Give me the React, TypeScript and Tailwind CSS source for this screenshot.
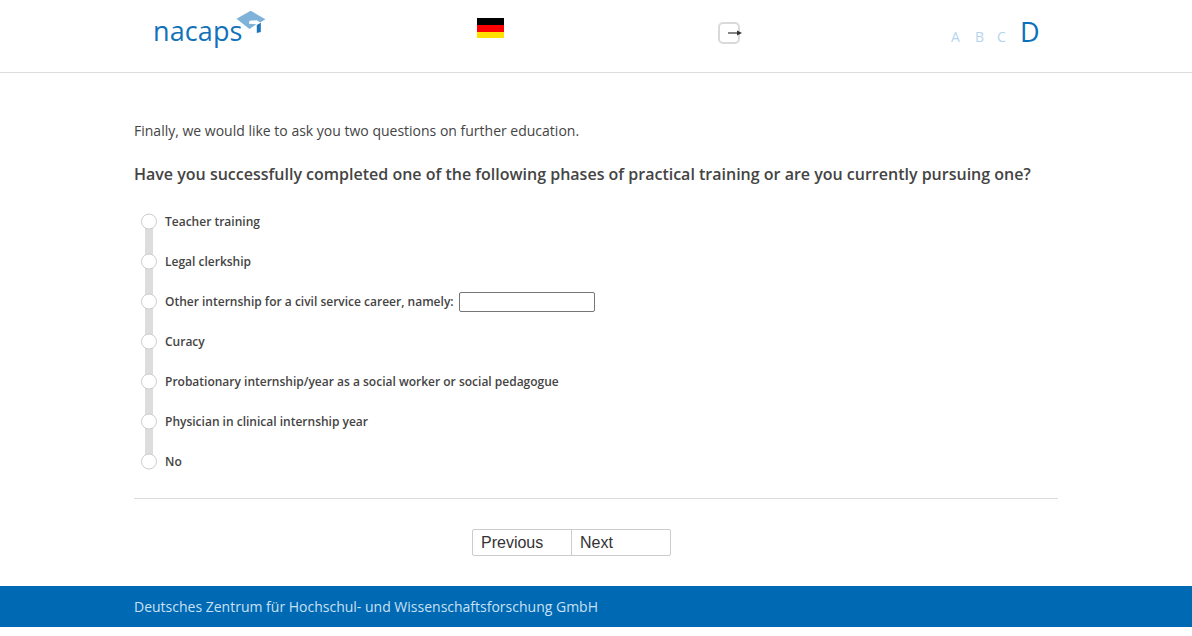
const options = [
  "Teacher training",
  "Legal clerkship",
  "Other internship for a civil service career, namely:",
  "Curacy",
  "Probationary internship/year as a social worker or social pedagogue",
  "Physician in clinical internship year",
  "No",
];

function Cap() {
  return (
    <svg width="32" height="26" viewBox="235 9 32 26" className="absolute left-[81px] top-[9px]">
      <path d="M236.5 18.7 L250.7 10.7 L265.4 19.3 L260.2 22.6 L256.8 20.2 L249.4 20.8 L249 23.8 L256.4 24.2 L249.4 29 Z" fill="#7fb2d9" />
      <path d="M256.8 25 L260.8 22.8 L260.8 32 L256.8 33 Z" fill="#1c75bc" />
    </svg>
  );
}

export default function App() {
  return (
    <div className="w-[1192px] h-[636px] bg-white flex flex-col text-[#444444] font-['Open_Sans',sans-serif] overflow-hidden">
      <header className="h-[73px] shrink-0 border-b border-[#dddddd] flex items-start pl-[154px]">
        <div className="relative w-[323px] h-[72px]">
          <span className="absolute left-[-1px] top-[11px] text-[27px] leading-[40px] font-medium tracking-[0.1px] text-[#1272b8]">nacaps</span>
          <Cap />
        </div>
        <div className="w-[241px] pt-[18px]">
          <div className="w-[27px] h-[20px] flex flex-col">
            <div className="h-[7px] bg-black" />
            <div className="h-[7px] bg-[#ff0000]" />
            <div className="h-[6px] bg-[#ffe000]" />
          </div>
        </div>
        <div className="w-[233px] pt-[22px]">
          <div className="relative w-[22px] h-[22px] rounded-[5px] border-2 border-[#dadada] bg-white">
            <svg width="16" height="8" viewBox="0 0 16 8" className="absolute left-[7px] top-[5px]">
              <path d="M1 4 H12" stroke="#444" strokeWidth="1.3" />
              <path d="M10 1.5 L15 4 L10 6.5 Z" fill="#333" />
            </svg>
          </div>
        </div>
        <div className="flex items-baseline text-[#b5d5ee] text-[14px] pt-[12px]">
          <span className="w-[24px]">A</span>
          <span className="w-[22px]">B</span>
          <span className="w-[23px]">C</span>
          <span className="text-[#0a6fbd] text-[27px] leading-[40px] font-medium">D</span>
        </div>
      </header>

      <main className="flex-1 w-[924px] ml-[134px] flex flex-col">
        <p className="text-[14px] leading-[20px] mt-[48px]">Finally, we would like to ask you two questions on further education.</p>
        <h1 className="text-[16px] leading-[22px] font-semibold mt-[22px]">
          Have you successfully completed one of the following phases of practical training or are you currently pursuing one?
        </h1>
        <div className="relative mt-[17px] flex flex-col">
          <div className="absolute left-[11px] top-[20px] h-[240px] w-[8px] bg-[#dddddd]" />
          {options.map((label, i) => (
            <div key={label} className="relative h-[40px] flex items-center pl-[7px]">
              <span className="w-[16px] h-[16px] rounded-full bg-white border border-[#cccccc] shrink-0 -translate-y-[0.5px]" />
              <span className="ml-[8px] text-[12px] font-semibold">{label}</span>
              {i === 2 && (
                <span className="ml-[5px] w-[136px] h-[20px] bg-white border border-[#767676] rounded-[2px]" />
              )}
            </div>
          ))}
        </div>
        <div className="border-t border-[#dddddd] mt-[16px]" />
        <div className="mt-[30px] ml-[338px] flex w-[199px] h-[27px] border border-[#cccccc] rounded-[2px] text-[16px] font-['Liberation_Sans',sans-serif] text-[#333333]">
          <div className="w-[99px] border-r border-[#cccccc] pl-[8px] leading-[25px]">Previous</div>
          <div className="pl-[8px] leading-[25px]">Next</div>
        </div>
      </main>

      <footer className="h-[41px] shrink-0 bg-[#0069b4] pl-[134px] text-[14px] leading-[41px] text-[#c9e0f2]">
        Deutsches Zentrum für Hochschul- und Wissenschaftsforschung GmbH
      </footer>
      <div className="h-[9px] shrink-0" />
    </div>
  );
}
